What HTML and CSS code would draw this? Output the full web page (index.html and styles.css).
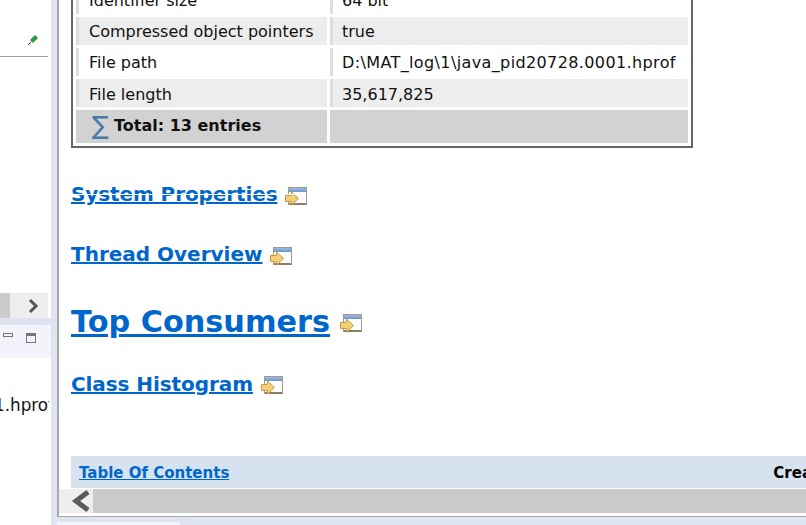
FILE: index.html
```html
<!DOCTYPE html>
<html lang="en">
<head>
    <meta charset="UTF-8">
    <title>Heap Dump Overview</title>
    <link rel="stylesheet" href="styles.css">
</head>
<body>
    <svg class="defs" width="0" height="0">
        <defs>
            <linearGradient id="title-bar" x1="0" y1="0" x2="0" y2="1">
                <stop offset="0" stop-color="#9dbbe2"/>
                <stop offset="1" stop-color="#6d95c9"/>
            </linearGradient>
        </defs>
        <symbol id="open-icon" viewBox="0 0 22 20">
            <rect x="3.500" y="1.500" width="18" height="17" fill="#fff" stroke="#a39a84"/>
            <rect x="4" y="2" width="17" height="4" fill="url(#title-bar)"/>
            <path d="M4 18h17" stroke="#8b7f63" stroke-width="2"/>
            <path d="M0.500 9.500h6V6l7 6.500-7 6.500v-3.500h-6z" fill="#f3d077" stroke="#c7983f"/>
        </symbol>
    </svg>

    <div class="side">
        <div class="side-top">
            <svg class="pin" width="12" height="12" viewBox="0 0 12 12"><path d="M1 11l3-3" stroke="#333" fill="none"/><path d="M3 6l4-4 1-1 3 3-1 1-4 4z" fill="#2c9a3c"/></svg>
        </div>
        <div class="side-list"></div>
        <div class="side-scroll">
            <div class="side-thumb"></div>
            <svg width="16" height="16" viewBox="0 0 16 16"><path d="M4 2l6 6-6 6" fill="none" stroke="#555" stroke-width="3"/></svg>
        </div>
        <div class="side-gap"></div>
        <div class="side-head">
            <span class="min-btn"></span>
            <span class="max-btn"></span>
        </div>
        <div class="side-body">
            <span class="side-file">1.hprof</span>
        </div>
    </div>

    <div class="main">
        <div class="frame">
            <div class="content">
                <table class="info">
                    <tr><td class="key">Identifier size</td><td>64 bit</td></tr>
                    <tr class="odd"><td class="key">Compressed object pointers</td><td>true</td></tr>
                    <tr><td class="key">File path</td><td class="path">D:\MAT_log\1\java_pid20728.0001.hprof</td></tr>
                    <tr class="odd last"><td class="key">File length</td><td>35,617,825</td></tr>
                    <tr class="total"><td class="key"><span class="sigma">∑</span>Total: 13 entries</td><td></td></tr>
                </table>

                <h3 class="link-head glitch"><a href="#">System Properties</a> <svg class="open"><use href="#open-icon"/></svg></h3>
                <h3 class="link-head thread"><a href="#">Thread Overview</a> <svg class="open"><use href="#open-icon"/></svg></h3>
                <h1 class="link-head big"><a href="#">Top Consumers</a> <svg class="open"><use href="#open-icon"/></svg></h1>
                <h3 class="link-head hist"><a href="#">Class Histogram</a> <svg class="open"><use href="#open-icon"/></svg></h3>

                <div class="toc">
                    <a href="#">Table Of Contents</a>
                    <b>Created by Eclipse Memory Analyzer</b>
                </div>
            </div>
            <div class="hscroll">
                <div class="arrow">
                    <svg width="20" height="24" viewBox="0 0 20 24"><path d="M17 3l-12 9 12 9" fill="none" stroke="#5a5a5a" stroke-width="5"/></svg>
                </div>
                <div class="thumb"></div>
            </div>
        </div>
        <div class="bottom-tab"></div>
    </div>
</body>
</html>
```
FILE: styles.css
```css
html, body {
    margin: 0;
    height: 100%;
}

body {
    width: 806px;
    height: 525px;
    overflow: hidden;
    display: flex;
    background-color: #dfe4f3;
    font-family: 'DejaVu Sans', sans-serif;
    font-size: 16px;
    color: #111;
}

.defs {
    position: absolute;
}

/* left views */
.side {
    width: 51px;
    flex: none;
    display: flex;
    flex-direction: column;
    background-color: #fff;
    overflow: hidden;
}

.side-top {
    height: 57px;
    width: 48px;
    flex: none;
    box-sizing: border-box;
    border-bottom: 1px solid #a0a0a0;
    display: flex;
    justify-content: flex-end;
    align-items: flex-end;
    padding: 0 9px 10px 0;
}

.side-list {
    height: 236px;
    flex: none;
}

.side-scroll {
    height: 25px;
    width: 48px;
    flex: none;
    display: flex;
    align-items: center;
    background-color: #eeeeee;
}

.side-scroll svg {
    margin-left: 16px;
}

.side-thumb {
    width: 10px;
    height: 100%;
    background-color: #cbcbcb;
}

.side-gap {
    height: 7px;
    flex: none;
    background-color: #dfe4f3;
}

.side-head {
    height: 33px;
    flex: none;
    background-color: #f3f4fb;
    border-top-right-radius: 6px;
    position: relative;
}

.min-btn {
    position: absolute;
    left: 3px;
    top: 8px;
    width: 8px;
    height: 2px;
    border: 1px solid #777;
}

.max-btn {
    position: absolute;
    left: 26px;
    top: 8px;
    width: 8px;
    height: 6px;
    border: 1px solid #777;
    border-top-width: 3px;
}

.side-body {
    flex: 1;
    width: 49px;
    overflow: hidden;
    white-space: nowrap;
}

.side-file {
    display: block;
    margin: 37px 0 0 -6px;
    line-height: 20px;
    font-size: 16.800px;
}

/* editor */
.main {
    flex: 1;
    min-width: 0;
    display: flex;
    flex-direction: column;
    padding-left: 6px;
}

.frame {
    height: 517px;
    flex: none;
    box-sizing: border-box;
    background-color: #fff;
    border-left: 2px solid #a8a8a8;
    border-bottom: 1px solid #a8a8a8;
    padding-bottom: 3px;
    display: flex;
    flex-direction: column;
    overflow: hidden;
}

.content {
    height: 488px;
    flex: none;
    padding-left: 12px;
    overflow: hidden;
    white-space: nowrap;
}

.info {
    width: 622px;
    margin-top: -19px;
    border: 2px solid #666;
    border-spacing: 3px;
    font-size: 16px;
    color: #111;
}

.info td {
    height: 28px;
    padding: 0 0 0 9px;
    box-sizing: border-box;
    border-left: 3px solid #dddddd;
}

.info .key {
    width: 251px;
    padding-left: 10px;
}

.info .path {
    letter-spacing: 0.380px;
}

.info .odd td {
    background-color: #ededed;
}

.info .last td {
    padding-top: 2px;
}

.info .total td {
    height: 33px;
    padding-bottom: 2px;
    background-color: #d2d2d2;
    border-left-color: #d2d2d2;
    font-weight: bold;
}

.sigma {
    display: inline-block;
    width: 22px;
    margin-left: 3px;
    color: #4a78a8;
    font-size: 25px;
    font-weight: normal;
    line-height: 16px;
    vertical-align: -3px;
}

.link-head {
    margin: 0;
    display: flex;
    align-items: flex-end;
    font-size: 20px;
    line-height: 24px;
    font-weight: bold;
}

.link-head a {
    color: #0066cc;
}

.link-head .open {
    width: 22px;
    height: 20px;
    margin-left: 8px;
    flex: none;
}

.glitch {
    margin-top: 34px;
    letter-spacing: -0.100px;
    position: relative;
}

.glitch::after {
    content: '';
    position: absolute;
    left: 0;
    top: 12px;
    width: 235px;
    height: 1px;
    background-color: #fff;
}

.thread {
    margin-top: 36px;
}

.big {
    margin-top: 37px;
    font-size: 30.300px;
    line-height: 38px;
}

.big .open {
    margin-left: 10px;
    margin-bottom: 8px;
}

.hist {
    margin-top: 31px;
    letter-spacing: -0.080px;
}

.hist .open {
    margin-bottom: 1px;
}

.toc {
    margin-top: 60px;
    height: 32px;
    padding: 2px 8px 0;
    background-color: #d6e3ef;
    display: flex;
    align-items: center;
    font-size: 15px;
    font-weight: bold;
    width: 800px;
    box-sizing: border-box;
}

.toc a {
    color: #0066cc;
}

.toc b {
    color: #000;
    margin-left: 544px;
}

.hscroll {
    height: 24px;
    flex: none;
    display: flex;
    margin-top: 1px;
}

.arrow {
    width: 34px;
    flex: none;
    background-color: #eeeeee;
    display: flex;
    align-items: center;
    justify-content: flex-end;
    padding-right: 2px;
    box-sizing: border-box;
}

.thumb {
    flex: 1;
    background-color: #cacaca;
}

.bottom-tab {
    width: 123px;
    height: 3px;
    margin-top: 5px;
    background-color: #f3f4fb;
    border-top-right-radius: 4px;
}
```
